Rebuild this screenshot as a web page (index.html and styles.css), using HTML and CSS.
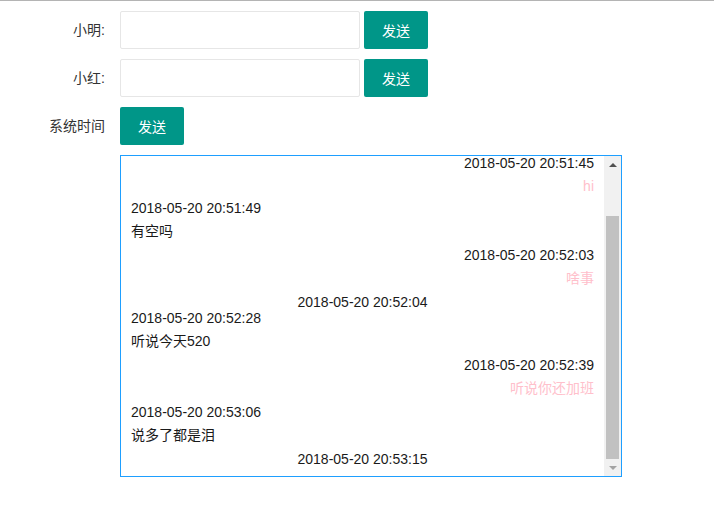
FILE: index.html
```html
<!DOCTYPE html>
<html>
<head>
<meta charset="utf-8">
<link rel="stylesheet" href="styles.css">
</head>
<body>
<div class="page">
  <div class="row">
    <label class="label">小明:</label>
    <input class="input" type="text">
    <button class="btn">发送</button>
  </div>
  <div class="row">
    <label class="label">小红:</label>
    <input class="input" type="text">
    <button class="btn">发送</button>
  </div>
  <div class="row">
    <label class="label">系统时间</label>
    <button class="btn btn-first">发送</button>
  </div>
  <div class="row">
    <div class="label"></div>
    <div class="chat">
      <div class="chat-view">
        <div class="chat-list">
          <div class="time right">2018-05-20 20:51:45</div>
          <div class="msg msg-latin right pink">hi</div>
          <div class="time">2018-05-20 20:51:49</div>
          <div class="msg">有空吗</div>
          <div class="time right">2018-05-20 20:52:03</div>
          <div class="msg right pink">啥事</div>
          <div class="time center">2018-05-20 20:52:04</div>
          <div class="time">2018-05-20 20:52:28</div>
          <div class="msg">听说今天520</div>
          <div class="time right">2018-05-20 20:52:39</div>
          <div class="msg right pink">听说你还加班</div>
          <div class="time">2018-05-20 20:53:06</div>
          <div class="msg">说多了都是泪</div>
          <div class="time center">2018-05-20 20:53:15</div>
        </div>
      </div>
      <div class="scrollbar">
        <div class="arrow up"></div>
        <div class="track"><div class="thumb"></div></div>
        <div class="arrow down"></div>
      </div>
    </div>
  </div>
</div>
</body>
</html>
```
FILE: styles.css
```css
html, body {
  margin: 0;
  padding: 0;
  background: #fff;
}
body {
  border-top: 1px solid #b4b4b4;
  font-family: "Liberation Sans", Arial, "Noto Sans CJK SC", sans-serif;
  font-size: 14px;
  color: #333;
}
.page {
  padding-top: 10px;
}
.row {
  display: flex;
  align-items: center;
  margin-bottom: 10px;
}
.label {
  width: 105px;
  padding-right: 15px;
  text-align: right;
  color: #333;
  font-size: 14px;
  line-height: 20px;
  flex: none;
}
.input {
  box-sizing: border-box;
  width: 240px;
  height: 38px;
  border: 1px solid #e6e6e6;
  border-radius: 2px;
  margin: 0;
  padding: 0 10px;
  outline: none;
  background: #fff;
}
.btn {
  box-sizing: border-box;
  height: 38px;
  width: 64px;
  margin: 0 0 0 4px;
  padding: 0;
  border: none;
  border-radius: 2px;
  background: #009688;
  color: #fff;
  font-family: "Liberation Sans", Arial, "Noto Sans CJK SC", sans-serif;
  font-size: 14px;
}
.btn-first {
  margin-left: 0;
}
.chat {
  box-sizing: border-box;
  width: 502px;
  height: 322px;
  border: 1px solid #1e9fff;
  display: flex;
}
.chat-view {
  flex: 1;
  overflow: hidden;
  display: flex;
  flex-direction: column;
  justify-content: flex-end;
  padding: 0 10px 12px 10px;
}
.chat-list {
  flex: none;
}
.time,
.msg {
  line-height: 23px;
  color: #1a1a1a;
  white-space: nowrap;
}
.time {
  height: 23px;
}
.msg {
  height: 24px;
}
.msg-latin {
  height: 22px;
}
.right {
  text-align: right;
}
.center {
  text-align: center;
  margin-bottom: -7px;
}
.pink {
  color: #ffc0cb;
}
.scrollbar {
  width: 17px;
  flex: none;
  background: #f1f1f1;
  display: flex;
  flex-direction: column;
}
.arrow {
  height: 17px;
  flex: none;
  display: flex;
  align-items: center;
  justify-content: center;
}
.arrow.up::before {
  content: "";
  border-left: 4px solid transparent;
  border-right: 4px solid transparent;
  border-bottom: 4px solid #505050;
}
.arrow.down::before {
  content: "";
  border-left: 4px solid transparent;
  border-right: 4px solid transparent;
  border-top: 4px solid #a3a3a3;
}
.track {
  flex: 1;
  display: flex;
  flex-direction: column;
  justify-content: flex-end;
  padding: 0 2px;
}
.thumb {
  height: 243px;
  background: #c1c1c1;
}
```
